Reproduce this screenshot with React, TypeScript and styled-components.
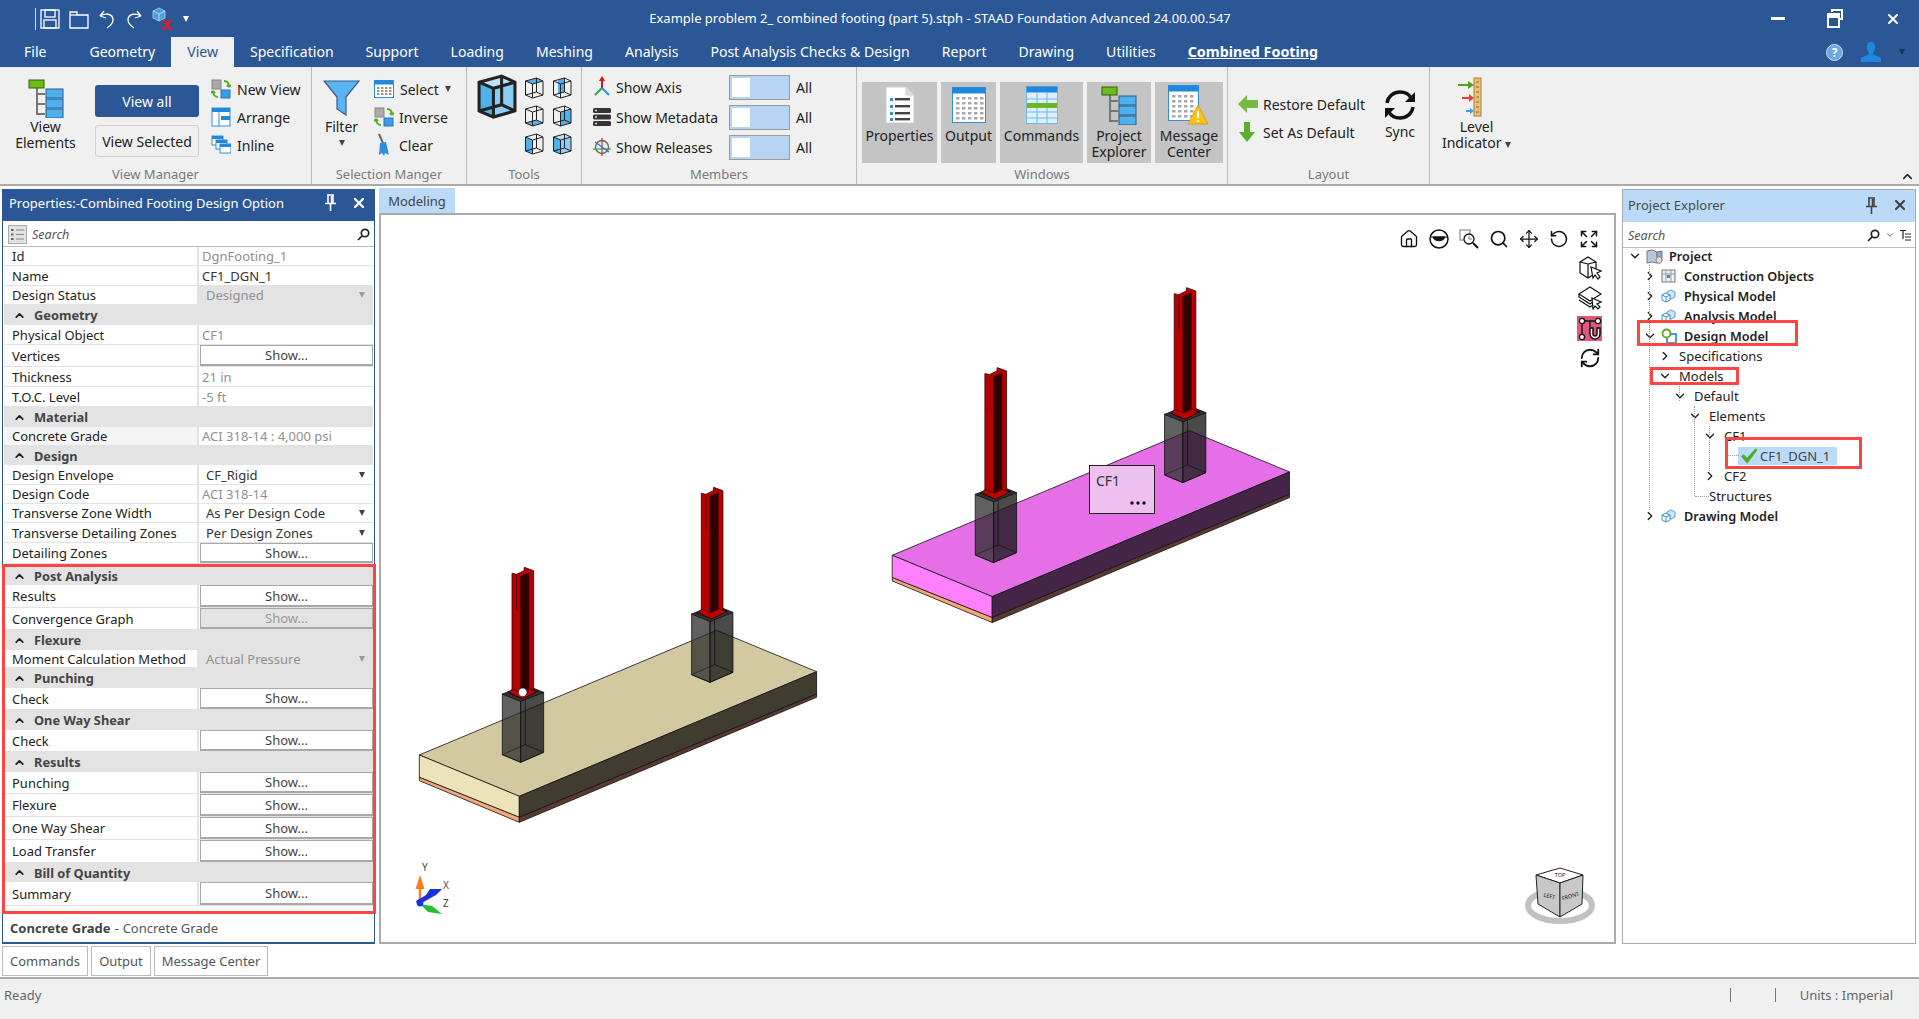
import React from 'react'
import styled, { createGlobalStyle } from 'styled-components'
import { ChevronDown, ChevronRight, ChevronUp, Expand, Home, Move, RefreshCw, RotateCcw, Search, X } from 'lucide-react'

const GlobalStyle = createGlobalStyle`
  html, body { margin: 0; padding: 0; background: #fff; }
  body { font-family: "Noto Sans", "Liberation Sans", sans-serif; color: #222; overflow: hidden; }
`
const BLUE = '#2b5797'

const Page = styled.div`
  width: 1919px;
  height: 1019px;
  display: flex;
  flex-direction: column;
  overflow: hidden;
`
/* title bar */
const TitleBar = styled.div`
  height: 37px;
  background: ${BLUE};
  display: flex;
  align-items: center;
  color: #fff;
`
const QuickBar = styled.div`
  width: 420px;
  display: flex;
  align-items: center;
  padding-left: 35px;
  gap: 9px;
  box-sizing: border-box;
  svg { display: block; }
`
const QuickSep = styled.div`
  width: 1px;
  height: 22px;
  background: #cfd9ea;
  margin-right: -5px;
`
const TitleText = styled.div`
  width: 1040px;
  text-align: center;
  font-size: 13px;
  margin-top: -2px;
`
const WinButtons = styled.div`
  flex: 1;
  display: flex;
  justify-content: flex-end;
  align-items: center;
  gap: 42px;
  padding-right: 18px;
`
/* tabs */
const TabRow = styled.div`
  height: 30px;
  background: ${BLUE};
  display: flex;
  align-items: stretch;
  padding-left: 24px;
  position: relative;
`
const Tab = styled.div<{ $active?: boolean; $strong?: boolean }>`
  display: flex;
  align-items: center;
  padding: 0 16px 2px;
  font-size: ${p => (p.$strong ? 14.3 : 14.05)}px;
  color: ${p => (p.$active ? BLUE : '#fff')};
  background: ${p => (p.$active ? '#f0f0f0' : 'transparent')};
  font-weight: ${p => (p.$strong ? 700 : 400)};
  text-decoration: ${p => (p.$strong ? 'underline' : 'none')};
`
const FileTab = styled(Tab)`
  padding: 0 0 2px;
  margin-right: 27px;
`
const TabRight = styled.div`
  position: absolute;
  right: 14px;
  top: 0;
  height: 30px;
  display: flex;
  align-items: center;
  gap: 17px;
`
/* ribbon */
const Ribbon = styled.div`
  height: 117px;
  background: #f0f0f0;
  border-bottom: 2px solid #aaa;
  display: flex;
  position: relative;
`
const Group = styled.div<{ $w: number; $last?: boolean }>`
  width: ${p => p.$w}px;
  box-sizing: border-box;
  border-right: ${p => (p.$last ? 'none' : '1px solid #bbb')};
  display: flex;
  flex-direction: column;
`
const GroupBody = styled.div<{ $gap?: number; $left?: number; $top?: number }>`
  flex: 1;
  display: flex;
  padding-left: ${p => p.$left || 0}px;
  padding-top: ${p => p.$top ?? 8}px;
  gap: ${p => p.$gap || 0}px;
  min-height: 0;
`
const GroupLabel = styled.div`
  height: 18px;
  text-align: center;
  font-size: 13px;
  color: #7a7a7a;
  line-height: 16px;
`
const BigCol = styled.div<{ $w: number }>`
  width: ${p => p.$w}px;
  display: flex;
  flex-direction: column;
  align-items: center;
  font-size: 14px;
  line-height: 16px;
  text-align: center;
`
const IconBox = styled.div<{ $h: number; $shift?: number }>`
  height: ${p => p.$h}px;
  display: flex;
  align-items: center;
  justify-content: center;
  margin-right: ${p => p.$shift || 0}px;
`
const BtnCol = styled.div`
  width: 104px;
  display: flex;
  flex-direction: column;
  gap: 8px;
  padding-top: 8px;
  margin: 0 12px 0 4px;
`
const RibbonButton = styled.div<{ $primary?: boolean }>`
  height: 32px;
  border-radius: 3px;
  display: flex;
  align-items: center;
  justify-content: center;
  font-size: 14px;
  box-sizing: border-box;
  background: ${p => (p.$primary ? BLUE : '#f0f0f0')};
  color: ${p => (p.$primary ? '#fff' : '#222')};
  border: ${p => (p.$primary ? 'none' : '1px solid #d0d0d0')};
`
const SmallCol = styled.div<{ $gap?: number; $top?: number }>`
  display: flex;
  flex-direction: column;
  gap: ${p => p.$gap ?? 8}px;
  padding-top: ${p => p.$top ?? 5}px;
`
const SmallItem = styled.div<{ $gap?: number }>`
  height: 20px;
  display: flex;
  align-items: center;
  gap: ${p => p.$gap ?? 6}px;
  font-size: 14px;
  white-space: nowrap;
`
const Caret = styled.span<{ $c?: string }>`
  display: inline-block;
  width: 0;
  height: 0;
  border-left: 3.5px solid transparent;
  border-right: 3.5px solid transparent;
  border-top: 6px solid ${p => p.$c || '#444'};
`
const CubeGrid = styled.div`
  display: grid;
  grid-template-columns: 28px 28px;
  grid-auto-rows: 28px;
  place-items: center;
  margin-left: 3px;
`
const MemberRow = styled.div`
  height: 30px;
  display: flex;
  align-items: center;
  font-size: 14px;
`
const MemberName = styled.div`
  width: 137px;
  display: flex;
  align-items: center;
  gap: 4px;
  white-space: nowrap;
`
const Toggle = styled.div`
  width: 61px;
  height: 25px;
  box-sizing: border-box;
  background: #b8d4f4;
  border: 1px solid #9a9a9a;
  padding: 2px;
  margin-right: 6px;
`
const Knob = styled.div`
  width: 18px;
  height: 100%;
  background: #fff;
`
const WinButton = styled.div<{ $w: number }>`
  width: ${p => p.$w}px;
  height: 81px;
  background: #c4c4c4;
  display: flex;
  flex-direction: column;
  align-items: center;
  font-size: 14px;
  line-height: 16px;
  text-align: center;
  white-space: nowrap;
`
const WinIcon = styled.div<{ $h: number }>`
  height: ${p => p.$h}px;
  display: flex;
  align-items: center;
  justify-content: center;
  flex-shrink: 0;
`
const Collapse = styled.div`
  position: absolute;
  right: 4px;
  bottom: 1px;
  height: 16px;
  color: #222;
`
/* main area */
const Main = styled.div`
  height: 758px;
  padding-top: 2px;
  display: flex;
  box-sizing: border-box;
`
const PropsPanel = styled.div`
  width: 373px;
  margin-left: 2px;
  display: flex;
  flex-direction: column;
  border: 1px solid ${BLUE};
  border-width: 0 1px 2px 1px;
  box-sizing: border-box;
  margin-top: 1px;
`
const PanelHead = styled.div<{ $light?: boolean }>`
  height: 32px;
  flex-shrink: 0;
  box-sizing: border-box;
  display: flex;
  align-items: center;
  padding: 0 7px ${p => (p.$light ? 2 : 5)}px ${p => (p.$light ? 5 : 6)}px;
  background: ${p => (p.$light ? '#bbdaf8' : BLUE)};
  color: ${p => (p.$light ? '#4a4a4a' : '#fff')};
  font-size: 13px;
`
const PanelTitle = styled.div`
  flex: 1;
`
const PinGroup = styled.div`
  display: flex;
  align-items: center;
  gap: 14px;
  svg { display: block; }
`
const SearchRow = styled.div`
  height: 26px;
  flex-shrink: 0;
  box-sizing: border-box;
  display: flex;
  align-items: center;
  gap: 5px;
  padding: 1px 4px 0 5px;
  border-bottom: 1px solid #bbb;
  font-size: 12.5px;
  font-style: italic;
  color: #555;
`
const Grow = styled.div`
  flex: 1;
`
const Row = styled.div<{ $h: number }>`
  height: ${p => p.$h}px;
  box-sizing: border-box;
  display: flex;
  border-bottom: 1px solid #e2e2e2;
  margin: 0 1px;
  font-size: 13px;
`
const RowLabel = styled.div<{ $active?: boolean }>`
  width: 195px;
  flex-shrink: 0;
  padding-left: 8px;
  display: flex;
  align-items: center;
  box-sizing: border-box;
  border-right: 2px solid #e2e2e2;
  background: ${p => (p.$active ? '#f5f5f5' : '#fff')};
  color: #222;
  white-space: nowrap;
`
const RowValue = styled.div<{ $kind: string }>`
  flex: 1;
  display: flex;
  align-items: center;
  justify-content: space-between;
  padding: 0 8px 0 ${p => (p.$kind === 'drop' || p.$kind === 'off' ? 7 : 3)}px;
  color: ${p => (p.$kind === 'edit' || p.$kind === 'drop' ? '#333' : '#909090')};
  background: ${p => (p.$kind === 'off' ? '#e3e3e3' : '#fff')};
`
const ShowButton = styled.div<{ $off?: boolean }>`
  flex: 1;
  display: flex;
  align-items: center;
  justify-content: center;
  border: 1px solid #a8a8a8;
  border-bottom-width: 2px;
  margin: 0 0 0 1px;
  background: ${p => (p.$off ? '#e3e3e3' : '#fff')};
  color: ${p => (p.$off ? '#999' : '#444')};
`
const SectionRow = styled.div<{ $h: number }>`
  height: ${p => p.$h}px;
  box-sizing: border-box;
  margin: 0 1px;
  background: #e3e3e3;
  display: flex;
  align-items: center;
  gap: 8px;
  padding-left: 9px;
  font-size: 12.8px;
  font-weight: 700;
  color: #444;
`
const Highlighted = styled.div`
  border: 3px solid #f44;
  padding-bottom: 5px;
  margin: 0 -2px 0 -1px;
  ${Row}, ${SectionRow} { margin: 0; }
  ${RowLabel} { width: 194px; padding-left: 7px; }
  ${SectionRow} { padding-left: 8px; }
`
const Description = styled.div`
  flex: 1;
  display: flex;
  align-items: center;
  padding-left: 7px;
  font-size: 13px;
  color: #555;
  b { color: #444; margin-right: 4px; }
  span { margin-left: 4px; }
`
const Center = styled.div`
  width: 1237px;
  margin-left: 4px;
  display: flex;
  flex-direction: column;
`
const ModelTab = styled.div`
  width: 76px;
  height: 25px;
  flex-shrink: 0;
  background: #bbdaf8;
  font-size: 13px;
  color: #444;
  display: flex;
  align-items: center;
  justify-content: center;
`
const Canvas = styled.div`
  flex: 1;
  border: 2px solid #aaa;
  position: relative;
  min-height: 0;
  svg.scene { display: block; width: 100%; height: 100%; }
`
const ToolRow = styled.div`
  position: absolute;
  top: 14px;
  right: 15px;
  display: flex;
  gap: 10px;
  svg { display: block; }
`
const ToolCol = styled.div`
  position: absolute;
  top: 41px;
  right: 12px;
  display: flex;
  flex-direction: column;
  align-items: center;
  gap: 6px;
  svg { display: block; }
`
const MagnetBox = styled.div`
  width: 25px;
  height: 25px;
  background: #e0567c;
  display: flex;
  align-items: center;
  justify-content: center;
`
const Explorer = styled.div`
  width: 294px;
  margin-left: 6px;
  border: 1px solid #aaa;
  box-sizing: border-box;
  margin-top: 1px;
  display: flex;
  flex-direction: column;
`
const Tree = styled.div`
  position: relative;
  flex: 1;
`
const TreeRow = styled.div<{ $chev: number; $bold?: boolean }>`
  height: 20px;
  box-sizing: border-box;
  padding-bottom: 4px;
  display: flex;
  align-items: center;
  padding-left: ${p => p.$chev}px;
  font-size: ${p => (p.$bold ? 12.7 : 13)}px;
  font-weight: ${p => (p.$bold ? 600 : 400)};
  color: #222;
  white-space: nowrap;
  svg { flex-shrink: 0; }
`
const ChevSlot = styled.div<{ $w: number }>`
  width: ${p => p.$w}px;
  display: flex;
  align-items: center;
`
const NodeIcon = styled.div`
  width: 23px;
  display: flex;
  align-items: center;
`
const Selected = styled.div`
  display: flex;
  align-items: center;
  gap: 2px;
  height: 18px;
  padding: 0 7px 0 2px;
  background: #bbdaf8;
  color: #444;
  margin-left: 15px;
`
const RedBox = styled.div<{ $x: number; $y: number; $w: number; $h: number }>`
  position: absolute;
  left: ${p => p.$x}px;
  top: ${p => p.$y}px;
  width: ${p => p.$w}px;
  height: ${p => p.$h}px;
  box-sizing: border-box;
  border: 3px solid #f44;
`
const VDash = styled.div<{ $x: number; $y: number; $h: number }>`
  position: absolute;
  left: ${p => p.$x}px;
  top: ${p => p.$y}px;
  height: ${p => p.$h}px;
  border-left: 1px dotted #999;
`
const HDash = styled.div<{ $x: number; $y: number; $w: number }>`
  position: absolute;
  left: ${p => p.$x}px;
  top: ${p => p.$y}px;
  width: ${p => p.$w}px;
  border-top: 1px dotted #999;
`
/* bottom */
const BottomTabs = styled.div`
  height: 33px;
  flex-shrink: 0;
  box-sizing: border-box;
  padding: 2px 0 1px 2px;
  display: flex;
  gap: 3px;
`
const BottomTab = styled.div<{ $w: number }>`
  width: ${p => p.$w}px;
  box-sizing: border-box;
  border: 1px solid #bbb;
  display: flex;
  align-items: center;
  justify-content: center;
  font-size: 13px;
  color: #555;
`
const StatusBar = styled.div`
  flex: 1;
  background: #f0f0f0;
  border-top: 2px solid #aaa;
  display: flex;
  align-items: center;
  padding: 0 26px 8px 4px;
  font-size: 13px;
  color: #666;
`
const StatusSep = styled.div<{ $gap: number }>`
  width: 1px;
  height: 14px;
  background: #777;
  margin-right: ${p => p.$gap}px;
`

/* ---------- ribbon icons ---------- */
const Save = () => (
  <svg width="20" height="20" viewBox="0 0 20 20" fill="none" stroke="#fff" strokeWidth="1.3">
    <rect x="1" y="1" width="18" height="18" />
    <rect x="5" y="1" width="10" height="7" />
    <rect x="4" y="11" width="12" height="8" />
  </svg>
)
const Folder = () => (
  <svg width="20" height="20" viewBox="0 0 20 20" fill="none" stroke="#fff" strokeWidth="1.3">
    <path d="M1 3h7v3h11v13H1z" />
    <path d="M1 6h7" />
  </svg>
)
const Undo = ({ flip }: { flip?: boolean }) => (
  <svg width="18" height="20" viewBox="0 0 18 20" fill="none" stroke="#fff" strokeWidth="1.3" style={flip ? { transform: 'scaleX(-1)' } : undefined}>
    <path d="M2 7l4-5M2 7l6 2" />
    <path d="M2 7c4-3 13-3 13 4 0 4-3 6-6 8" />
  </svg>
)
const CubeX = () => (
  <svg width="22" height="26" viewBox="0 0 22 26">
    <path d="M7 2l6 3v7l-6 3-6-3V5z" fill="#4a9fe0" stroke="#bcd" strokeWidth=".8" />
    <path d="M1 5l6 3 6-3M7 8v7" stroke="#cfe3f6" strokeWidth=".8" fill="none" />
    <path d="M11 14l8 10M19 14l-8 10" stroke="#e81c1c" strokeWidth="2.4" />
  </svg>
)
const Pin = ({ c }: { c: string }) => (
  <svg width="13" height="17" viewBox="0 0 13 17" fill="none" stroke={c} strokeWidth="1.6">
    <path d="M3 1h7M4 1v8M9 1v8M1 9.5h11" />
    <path d="M6.5 10v7" />
    <path d="M7.5 2v7" strokeWidth="1.6" />
  </svg>
)
const TreeIcon = () => (
  <svg width="36" height="39" viewBox="0 0 36 39">
    <path d="M9 9v26h8M9 15h8M9 25h8" fill="none" stroke="#777" strokeWidth="2" />
    <rect x="1" y="1" width="15" height="8" fill="#6bbd14" stroke="#3a5a10" />
    {[10, 20, 30].map(y => (
      <rect key={y} x="18" y={y} width="17" height="9" fill="#4fb0ee" stroke="#2a5a88" />
    ))}
  </svg>
)
const NewViewIcon = () => (
  <svg width="20" height="20" viewBox="0 0 20 20">
    <rect x="1" y="1" width="9" height="9" fill="#aaa" stroke="#888" />
    <rect x="10" y="11" width="9" height="8" fill="#3a9be8" stroke="#2877b8" />
    <path d="M13 2c3 0 5 2 5 6M18 8l-2-2M18 8l2-2" fill="none" stroke="#4caf20" strokeWidth="1.8" />
    <path d="M7 18c-3 0-5-2-5-6M2 12l-2 2M2 12l2 2" fill="none" stroke="#4caf20" strokeWidth="1.8" />
  </svg>
)
const ArrangeIcon = () => (
  <svg width="20" height="20" viewBox="0 0 20 20">
    <rect x="1" y="1" width="18" height="18" fill="#fff" stroke="#2f8fdd" />
    <rect x="1" y="1" width="18" height="4" fill="#1f88dd" />
    <rect x="10" y="9" width="9" height="4" fill="#1f88dd" />
    <path d="M8 5v14" stroke="#2f8fdd" />
  </svg>
)
const InlineIcon = () => (
  <svg width="20" height="20" viewBox="0 0 20 20">
    {[0, 4, 8].map(o => (
      <g key={o}>
        <rect x={o + 1} y={o + 1} width="11" height="9" fill="#fff" stroke="#2f8fdd" />
        <rect x={o + 1} y={o + 1} width="11" height="3" fill="#1f88dd" />
      </g>
    ))}
  </svg>
)
const Funnel = () => (
  <svg width="37" height="36" viewBox="0 0 37 36">
    <path d="M1 1h35L23 17v18l-9-6V17z" fill="#58b4f2" stroke="#3a5f80" strokeWidth="1.2" />
  </svg>
)
const SelectIcon = () => (
  <svg width="20" height="18" viewBox="0 0 20 18">
    <rect x=".5" y=".5" width="19" height="17" fill="#fff" stroke="#2f8fdd" />
    <rect x=".5" y=".5" width="19" height="4" fill="#1f88dd" />
    {[7, 10, 13].map(y => [3, 7, 11, 15].map(x => <rect key={`${x}${y}`} x={x} y={y} width="2.5" height="2" fill="#999" />))}
  </svg>
)
const Broom = () => (
  <svg width="20" height="24" viewBox="0 0 20 24">
    <path d="M5 1l4 9" stroke="#666" strokeWidth="2" />
    <path d="M6 10l6-1 3 13-4-2-1 3-2-3-3 2z" fill="#2f8fdd" />
  </svg>
)
const Cube = ({ size, mode, heavy }: { size: number; mode: number; heavy?: boolean }) => (
  <svg width={size} height={size * 1.1} viewBox="0 0 40 44">
    <path d="M3 8l22-6 13 6v28l-21 6L3 36z" fill="#bfe0f8" fillOpacity={mode === 0 ? 1 : 0} />
    {mode === 0 && <path d="M3 8l14 6v28L3 36z" fill="#4fb0ee" />}
    {mode === 0 && <path d="M17 14l21-6v28l-21 6z" fill="#8ccdf6" />}
    {mode === 1 && <path d="M3 8l22-6 13 6-21 6z" fill="#4fb0ee" />}
    {mode === 2 && <path d="M17 14l21-6v28l-21 6z" fill="#4fb0ee" />}
    {mode === 3 && <path d="M3 36l22-6 13 6-21 6z" fill="#4fb0ee" />}
    {mode === 4 && <path d="M3 8l14 6v28L3 36z" fill="#4fb0ee" />}
    {mode === 5 && <path d="M12 6l13-4v28l-13 4z" fill="#4fb0ee" />}
    <path
      d="M3 8l22-6 13 6v28l-21 6L3 36zM3 8l14 6 21-6M17 14v28M25 2v28M3 36l22-6 13 6"
      fill="none"
      stroke="#222"
      strokeWidth={heavy ? 3 : 2}
    />
  </svg>
)
const AxisIcon = () => (
  <svg width="20" height="22" viewBox="0 0 20 22" fill="none" strokeWidth="2">
    <path d="M10 12V3" stroke="#e01010" />
    <path d="M10 0l3 5H7z" fill="#e01010" />
    <path d="M10 12l-7 7" stroke="#2aa83a" />
    <path d="M10 12l7 7" stroke="#2f8fdd" />
  </svg>
)
const MetaIcon = () => (
  <svg width="20" height="20" viewBox="0 0 20 20">
    {[1, 7.5, 14].map(y => (
      <g key={y}>
        <rect x="1" y={y} width="18" height="5" rx="1.5" fill="#333" />
        <circle cx="4" cy={y + 2.5} r="1" fill="#ddd" />
      </g>
    ))}
  </svg>
)
const ReleaseIcon = () => (
  <svg width="20" height="20" viewBox="0 0 20 20" fill="none">
    <circle cx="10" cy="10" r="6.5" stroke="#666" strokeWidth="1.4" />
    <path d="M10 1v18" stroke="#c33" strokeWidth="1.2" />
    <path d="M1 12h18" stroke="#2aa83a" strokeWidth="1.2" />
    <path d="M3 5l14 10" stroke="#2f6fdd" strokeWidth="1.2" />
  </svg>
)
const PropsIcon = () => (
  <svg width="32" height="38" viewBox="0 0 32 38">
    <path d="M2 1h20l8 8v28H2z" fill="#fff" stroke="#ccc" />
    <path d="M22 1v8h8" fill="#ddd" stroke="#ccc" />
    {[12, 19, 26, 32].map(y => (
      <g key={y}>
        <rect x="6" y={y} width="3" height="3" fill="#2f8fdd" />
        <rect x="11" y={y} width="15" height="2.4" fill="#444" />
      </g>
    ))}
  </svg>
)
const OutputIcon = () => (
  <svg width="34" height="36" viewBox="0 0 34 36">
    <rect x=".5" y=".5" width="33" height="35" fill="#fff" stroke="#2f8fdd" />
    <rect x=".5" y=".5" width="33" height="6" fill="#1f88dd" />
    {[10, 15, 20, 25, 30].map(y => [4, 10, 16, 22, 28].map(x => <rect key={`${x}${y}`} x={x} y={y} width="3.5" height="2.5" fill="#a8a8a8" />))}
  </svg>
)
const CommandsIcon = () => (
  <svg width="32" height="38" viewBox="0 0 32 38">
    <rect x=".5" y=".5" width="31" height="37" fill="#dff0fd" stroke="#6fb8ee" />
    <rect x=".5" y=".5" width="31" height="6" fill="#1f88dd" />
    <path d="M1 13h30M1 26h30M1 32h30M11 6v32M21 6v32" stroke="#6fb8ee" />
    <rect x="1" y="17" width="30" height="5" fill="#6ab820" />
  </svg>
)
const MessageIcon = () => (
  <svg width="42" height="40" viewBox="0 0 42 40">
    <rect x=".5" y=".5" width="30" height="35" fill="#fff" stroke="#2f8fdd" />
    <rect x=".5" y=".5" width="30" height="6" fill="#1f88dd" />
    {[10, 15, 20, 25, 30].map(y => [4, 10, 16, 22].map(x => <rect key={`${x}${y}`} x={x} y={y} width="3.5" height="2.5" fill="#a8a8a8" />))}
    <path d="M30 20l10 19H20z" fill="#f6c21c" stroke="#e0a010" />
    <path d="M30 26v7M30 35v2" stroke="#fff" strokeWidth="2" />
  </svg>
)
const GreenLeft = () => (
  <svg width="20" height="18" viewBox="0 0 20 18">
    <path d="M0 9l9-9v5h11v8H9v5z" fill="#79b843" />
  </svg>
)
const GreenDown = () => (
  <svg width="18" height="20" viewBox="0 0 18 20">
    <path d="M9 20L1 10h5V0h6v10h5z" fill="#5cae2e" />
  </svg>
)
const SyncIcon = () => (
  <svg width="34" height="32" viewBox="0 0 34 32" fill="none" stroke="#111" strokeWidth="3.4">
    <path d="M4 14C5 7 11 3 17 3c5 0 9 2 11 6" />
    <path d="M30 18c-1 7-7 11-13 11-5 0-9-2-11-6" />
    <path d="M32 3v10H22z" fill="#111" stroke="none" />
    <path d="M2 29V19h10z" fill="#111" stroke="none" />
  </svg>
)
const LevelIcon = () => (
  <svg width="24" height="40" viewBox="0 0 24 40">
    <rect x="16" y="1" width="7" height="38" fill="#e8c078" stroke="#a87f3a" />
    <path d="M18 5h3M18 10h3M18 15h3M18 20h3M18 25h3M18 30h3M18 35h3" stroke="#8a6a30" />
    <path d="M0 7h10V4l6 4-6 4V9H0z" fill="#5a9e20" />
    <path d="M4 20h7v-3l5 4-5 4v-3H4z" fill="#f03a3a" />
    <path d="M8 33h4v-2l4 3-4 3v-2H8z" fill="#3aa0e8" />
  </svg>
)
const ListBox = () => (
  <svg width="19" height="19" viewBox="0 0 19 19">
    <rect x=".5" y=".5" width="18" height="18" fill="#e2e2e2" stroke="#aaa" />
    <path d="M8 5h8M8 9.5h8M8 14h8" stroke="#888" />
    <path d="M3 5h2.5M3 9.5h2.5M3 14h2.5" stroke="#666" strokeWidth="2" />
  </svg>
)
const Magnifier = ({ size = 13 }: { size?: number }) => (
  <svg width={size} height={size} viewBox="0 0 13 13" fill="none" stroke="#222" strokeWidth="1.7">
    <circle cx="8" cy="5" r="3.7" />
    <path d="M5.4 7.6L1 12" />
  </svg>
)
const TreeToggle = () => (
  <svg width="11" height="12" viewBox="0 0 11 12" stroke="#222" strokeWidth="1.2" fill="none">
    <path d="M0 1.5h6M3 1.5V10M5 5h6M5 8h6M5 11h6" />
  </svg>
)
const ModelNode = () => (
  <svg width="16" height="15" viewBox="0 0 16 15" fill="none">
    <path d="M6 3l4-2 4 2v5l-4 2-4-2z" fill="#cfe6f7" stroke="#5a9fd0" />
    <path d="M1 6l4-2 4 2v5l-4 2-4-2z" fill="#fff" stroke="#3a8fd0" />
    <path d="M5 8v5M1 6l4 2 4-2" stroke="#3a8fd0" />
  </svg>
)
const ObjectsNode = () => (
  <svg width="15" height="14" viewBox="0 0 15 14">
    <rect x="1" y="1" width="13" height="12" fill="#eef2f6" stroke="#777" />
    <path d="M1 5h13M5 1v12M10 1v12" stroke="#99a" />
    <rect x="6" y="6" width="3" height="3" fill="#48a" />
  </svg>
)
const ProjectNode = () => (
  <svg width="18" height="15" viewBox="0 0 18 15">
    <path d="M1 2l5-1 5 2v11l-5-1-5 1z" fill="#b8c8d8" stroke="#778" />
    <path d="M11 3l5-1v10l-5 2z" fill="#8fa8c0" stroke="#778" />
    <ellipse cx="13" cy="11" rx="3" ry="3.4" fill="#ddd" stroke="#888" />
  </svg>
)
const DesignNode = () => (
  <svg width="16" height="16" viewBox="0 0 16 16" fill="none">
    <rect x="6" y="6" width="9" height="9" stroke="#2f8fdd" strokeWidth="1.8" />
    <circle cx="5.5" cy="5.5" r="4" fill="#fff" stroke="#5aa81e" strokeWidth="1.8" />
  </svg>
)
const Check = () => (
  <svg width="18" height="18" viewBox="0 0 15 15">
    <path d="M1 8l2-2 3 3 7-8 1.5 1.5L6 14z" fill="#4caf20" />
  </svg>
)
const EyeIcon = () => (
  <svg width="20" height="20" viewBox="0 0 20 20" fill="none">
    <circle cx="10" cy="10" r="9" stroke="#111" strokeWidth="1.5" />
    <path d="M2 8h16M4 8c1 5 11 5 12 0z" fill="#111" stroke="#111" strokeWidth="1" />
  </svg>
)
const ZoomWindow = () => (
  <svg width="20" height="20" viewBox="0 0 20 20" fill="none" stroke="#111">
    <rect x="1" y="1" width="10" height="10" stroke="#777" />
    <circle cx="10" cy="10" r="5" fill="#fff" strokeWidth="1.3" />
    <path d="M14 14l5 5" strokeWidth="2" />
    <path d="M10 7v3h3" stroke="#777" />
  </svg>
)
const CubeCursor = () => (
  <svg width="24" height="24" viewBox="0 0 24 24" fill="none" stroke="#111" strokeWidth="1.2">
    <path d="M2 6l8-5 8 5v11l-8 5-8-5z" />
    <path d="M10 8l8-2M10 8v14M2 6l8 2" />
    <path d="M13 11l10 4-4 2 3 4-2 2-3-4-2 3z" fill="#fff" />
  </svg>
)
const LayerCursor = () => (
  <svg width="24" height="24" viewBox="0 0 24 24" fill="none" stroke="#111" strokeWidth="1.2">
    <path d="M1 8l11-7 11 7-11 7z" />
    <path d="M1 8v3l11 7 3-2M1 14l11 7 3-2" />
    <path d="M14 12l9 4-4 2 3 3-2 2-3-3-2 3z" fill="#fff" />
  </svg>
)
const MagnetIcon = () => (
  <svg width="24" height="24" viewBox="0 0 24 24" fill="none" stroke="#111" strokeWidth="1.3">
    <path d="M5 4h14M4 6v12M12 4v6" />
    <circle cx="4" cy="4" r="2.6" fill="#fff" />
    <circle cx="20" cy="4" r="2.6" fill="#fff" />
    <circle cx="4" cy="20" r="2.6" fill="#fff" />
    <path d="M12 11v6a5 5 0 0 0 10 0v-6h-3v6a2 2 0 0 1-4 0v-6z" fill="#fff" strokeWidth="1.5" />
  </svg>
)
const UserIcon = () => (
  <svg width="22" height="20" viewBox="0 0 22 20">
    <path d="M11 0c3 0 4 2 4 5s-1 5-2 6c0 2 4 3 8 5v4H1v-4c4-2 8-3 8-5-1-1-2-3-2-6s1-5 4-5z" fill="#1f88dd" />
  </svg>
)
const Help = () => (
  <svg width="17" height="17" viewBox="0 0 17 17">
    <circle cx="8.5" cy="8.5" r="8" fill="#6aa6e8" stroke="#cfe2f8" />
    <text x="8.5" y="13" fontSize="12" fontWeight="700" textAnchor="middle" fill="#fff" fontFamily="Noto Sans">?</text>
  </svg>
)

/* ---------- 3d scene, coordinates follow the footing drawing ---------- */
const Column = ({ dx, dy, pivot }: { dx: number; dy: number; pivot?: boolean }) => (
  <g transform={`translate(${dx} ${dy})`} stroke="#111" strokeWidth="2.4" strokeLinejoin="round">
    <polygon points="367,827 422,850 491,820 436,797" fill="rgba(255,255,255,.12)" />
    <polygon points="367,645 422,667 422,850 367,827" fill="rgba(40,40,40,.74)" />
    <polygon points="422,667 491,640 491,820 422,850" fill="rgba(20,20,20,.77)" />
    <path d="M436,664V797" fill="none" />
    <polygon points="367,645 422,667 491,640 436,618" fill="#333" />
    <polygon points="382,642 422,658 475,637 436,622" fill="#3f3f3f" />
    <polygon points="396,283 410,286 432,275 433,265 461,275 461,634 428,656 396,640" fill="#b80000" stroke="#300" />
    <polygon points="421,291 448,279 448,630 421,642" fill="#300000" stroke="none" />
    <path d="M410,290V392" stroke="#300" fill="none" />
    <polygon points="386,640 428,660 470,638 448,630 424,642 398,630" fill="#c00000" stroke="#300" />
    {pivot && <circle cx="428" cy="640" r="13" fill="#fff" stroke="#222" />}
  </g>
)
const Footing = ({ top, left, right, stripL, stripR, dx = 0, dy = 0, pivot }: {
  top: string; left: string; right: string; stripL: string; stripR: string; dx?: number; dy?: number; pivot?: boolean
}) => (
  <g transform={`translate(${380 + dx} ${480 + dy}) scale(.3333)`}>
    <g stroke="#111" strokeWidth="2.4" strokeLinejoin="round">
      <polygon points="118,828 418,952 1310,578 1010,454" fill={top} />
      <polygon points="118,828 418,952 418,1015 118,895" fill={left} />
      <polygon points="418,952 1310,578 1310,645 418,1015" fill={right} />
      <polygon points="118,895 418,1015 418,1030 118,905" fill={stripL} />
      <polygon points="418,1015 1310,645 1310,655 418,1030" fill={stripR} />
    </g>
    <Column dx={568} dy={-240} />
    <Column dx={0} dy={0} pivot={pivot} />
  </g>
)
const Scene = () => (
  <svg className="scene" viewBox="381 216 1233 727">
    <Footing top="#d3c9a1" left="#ede3bb" right="#403c2f" stripL="#f4a878" stripR="#5a3a30" pivot />
    <Footing top="#e46fe6" left="#ff80ff" right="#442548" stripL="#f4a878" stripR="#5a3a30" dx={472.9} dy={-199.7} />
    <rect x="1089.5" y="466.5" width="65" height="48" fill="#edc0ef" stroke="#222" />
    <text x="1096" y="487" fontSize="14" fill="#333" fontFamily="Noto Sans">CF1</text>
    <g fill="#111">
      <circle cx="1132" cy="504" r="1.7" />
      <circle cx="1138" cy="504" r="1.7" />
      <circle cx="1144" cy="504" r="1.7" />
    </g>
    {/* axis triad */}
    <path d="M420 901V888" stroke="#ff7a20" strokeWidth="2.4" />
    <path d="M420 876l4.5 14h-9z" fill="#ff7a20" />
    <path d="M418 906l18-10 6-6h-12l-4 6-10 6z" fill="#1a30e0" />
    <path d="M420 905l12 2 10 8-14-2-4-4z" fill="#20c030" />
    <circle cx="420" cy="904" r="3.4" fill="#1a30e0" />
    <g fontSize="10" fill="#444" fontFamily="Noto Sans">
      <text x="422" y="872">Y</text>
      <text x="443" y="890">X</text>
      <text x="443" y="908">Z</text>
    </g>
    {/* view cube */}
    <ellipse cx="1560" cy="906.5" rx="32" ry="15.5" fill="#fff" stroke="#c0c0c0" strokeWidth="6" />
    <g stroke="#222" strokeWidth="1" strokeLinejoin="round">
      <polygon points="1536,876 1560,869 1583,876 1560,884" fill="#fff" />
      <polygon points="1536,876 1560,884 1560,918 1538,905" fill="#c8c8c8" />
      <polygon points="1560,884 1583,876 1582,905 1560,918" fill="#c8c8c8" />
    </g>
    <g fontSize="5.5" fill="#111" fontFamily="Noto Sans" textAnchor="middle">
      <text x="1560" y="878">TOP</text>
      <text x="1549" y="899" transform="rotate(14 1549 899)">LEFT</text>
      <text x="1571" y="899" transform="rotate(-16 1571 899)">FRONT</text>
    </g>
  </svg>
)

/* ---------- data ---------- */
type Item =
  | { s: string; h: number }
  | { l: string; h: number; v?: string; k: 'read' | 'edit' | 'drop' | 'off' | 'show' | 'showoff'; active?: boolean }

const upper: Item[] = [
  { l: 'Id', h: 19, v: 'DgnFooting_1', k: 'read' },
  { l: 'Name', h: 20, v: 'CF1_DGN_1', k: 'edit' },
  { l: 'Design Status', h: 19, v: 'Designed', k: 'off' },
  { s: 'Geometry', h: 20 },
  { l: 'Physical Object', h: 20, v: 'CF1', k: 'read' },
  { l: 'Vertices', h: 22, k: 'show' },
  { l: 'Thickness', h: 20, v: '21 in', k: 'read' },
  { l: 'T.O.C. Level', h: 20, v: '-5 ft', k: 'read' },
  { s: 'Material', h: 20 },
  { l: 'Concrete Grade', h: 19, v: 'ACI 318-14 : 4,000 psi', k: 'read', active: true },
  { s: 'Design', h: 19 },
  { l: 'Design Envelope', h: 20, v: 'CF_Rigid', k: 'drop' },
  { l: 'Design Code', h: 19, v: 'ACI 318-14', k: 'read' },
  { l: 'Transverse Zone Width', h: 19, v: 'As Per Design Code', k: 'drop' },
  { l: 'Transverse Detailing Zones', h: 20, v: 'Per Design Zones', k: 'drop' },
  { l: 'Detailing Zones', h: 21, k: 'show' },
]
const lower: Item[] = [
  { s: 'Post Analysis', h: 18 },
  { l: 'Results', h: 23, k: 'show' },
  { l: 'Convergence Graph', h: 22, k: 'showoff' },
  { s: 'Flexure', h: 20 },
  { l: 'Moment Calculation Method', h: 18, v: 'Actual Pressure', k: 'off' },
  { s: 'Punching', h: 20 },
  { l: 'Check', h: 22, k: 'show' },
  { s: 'One Way Shear', h: 20 },
  { l: 'Check', h: 22, k: 'show' },
  { s: 'Results', h: 20 },
  { l: 'Punching', h: 22, k: 'show' },
  { l: 'Flexure', h: 23, k: 'show' },
  { l: 'One Way Shear', h: 23, k: 'show' },
  { l: 'Load Transfer', h: 23, k: 'show' },
  { s: 'Bill of Quantity', h: 19 },
  { l: 'Summary', h: 24, k: 'show' },
]
const renderItem = (it: Item, i: number) => {
  if ('s' in it) {
    return (
      <SectionRow key={i} $h={it.h}>
        <ChevronUp size={13} strokeWidth={3.4} color="#222" />
        {it.s}
      </SectionRow>
    )
  }
  return (
    <Row key={i} $h={it.h}>
      <RowLabel $active={it.active}>{it.l}</RowLabel>
      {it.k === 'show' || it.k === 'showoff' ? (
        <ShowButton $off={it.k === 'showoff'}>Show...</ShowButton>
      ) : (
        <RowValue $kind={it.k}>
          {it.v}
          {it.k === 'drop' && <Caret />}
          {it.k === 'off' && <Caret $c="#999" />}
        </RowValue>
      )}
    </Row>
  )
}
const Chev = ({ open }: { open?: boolean }) =>
  open ? <ChevronDown size={14} strokeWidth={2.4} color="#222" /> : <ChevronRight size={14} strokeWidth={2.4} color="#222" />

export default function App() {
  return (
    <Page>
      <GlobalStyle />
      <TitleBar>
        <QuickBar>
          <QuickSep />
          <Save />
          <Folder />
          <Undo />
          <Undo flip />
          <CubeX />
          <Caret $c="#fff" />
        </QuickBar>
        <TitleText>Example problem 2_ combined footing (part 5).stph - STAAD Foundation Advanced 24.00.00.547</TitleText>
        <WinButtons>
          <svg width="14" height="3" viewBox="0 0 14 3"><rect width="14" height="3" fill="#fff" /></svg>
          <svg width="16" height="19" viewBox="0 0 16 19" fill="none" stroke="#fff" strokeWidth="2">
            <path d="M5 3V1h10v9h-3" />
            <rect x="1" y="5" width="11" height="13" />
            <rect x="1" y="5" width="11" height="3" fill="#fff" />
          </svg>
          <X size={16} color="#fff" strokeWidth={3} />
        </WinButtons>
      </TitleBar>
      <TabRow>
        <FileTab>File</FileTab>
        <Tab>Geometry</Tab>
        <Tab $active>View</Tab>
        <Tab>Specification</Tab>
        <Tab>Support</Tab>
        <Tab>Loading</Tab>
        <Tab>Meshing</Tab>
        <Tab>Analysis</Tab>
        <Tab>Post Analysis Checks &amp; Design</Tab>
        <Tab>Report</Tab>
        <Tab>Drawing</Tab>
        <Tab>Utilities</Tab>
        <Tab $strong>Combined Footing</Tab>
        <TabRight>
          <Help />
          <UserIcon />
          <Caret $c="#14335f" />
        </TabRight>
      </TabRow>
      <Ribbon>
        <Group $w={312}>
          <GroupBody $top={10}>
            <BigCol $w={91}>
              <IconBox $h={42}><TreeIcon /></IconBox>
              <div>View<br />Elements</div>
            </BigCol>
            <BtnCol>
              <RibbonButton $primary>View all</RibbonButton>
              <RibbonButton>View Selected</RibbonButton>
            </BtnCol>
            <SmallCol $top={2}>
              <SmallItem><NewViewIcon />New View</SmallItem>
              <SmallItem><ArrangeIcon />Arrange</SmallItem>
              <SmallItem><InlineIcon />Inline</SmallItem>
            </SmallCol>
          </GroupBody>
          <GroupLabel>View Manager</GroupLabel>
        </Group>
        <Group $w={155}>
          <GroupBody $left={11} $top={10} $gap={14}>
            <BigCol $w={37}>
              <IconBox $h={42}><Funnel /></IconBox>
              <div>Filter</div>
              <IconBox $h={16}><Caret /></IconBox>
            </BigCol>
            <SmallCol $top={2}>
              <SmallItem>
                <SelectIcon />Select<Caret />
              </SmallItem>
              <SmallItem $gap={5}><NewViewIcon />Inverse</SmallItem>
              <SmallItem $gap={5}><Broom />Clear</SmallItem>
            </SmallCol>
          </GroupBody>
          <GroupLabel>Selection Manger</GroupLabel>
        </Group>
        <Group $w={115}>
          <GroupBody $left={9} $top={7}>
            <Cube size={41} mode={0} heavy />
            <CubeGrid>
              <Cube size={20} mode={1} />
              <Cube size={20} mode={5} />
              <Cube size={20} mode={3} />
              <Cube size={20} mode={2} />
              <Cube size={20} mode={4} />
              <Cube size={20} mode={0} />
            </CubeGrid>
          </GroupBody>
          <GroupLabel>Tools</GroupLabel>
        </Group>
        <Group $w={275}>
          <GroupBody $left={10} $top={5}>
            <div>
              <MemberRow>
                <MemberName><AxisIcon />Show Axis</MemberName>
                <Toggle><Knob /></Toggle>All
              </MemberRow>
              <MemberRow>
                <MemberName><MetaIcon />Show Metadata</MemberName>
                <Toggle><Knob /></Toggle>All
              </MemberRow>
              <MemberRow>
                <MemberName><ReleaseIcon />Show Releases</MemberName>
                <Toggle><Knob /></Toggle>All
              </MemberRow>
            </div>
          </GroupBody>
          <GroupLabel>Members</GroupLabel>
        </Group>
        <Group $w={371}>
          <GroupBody $left={5} $top={15} $gap={4}>
            <WinButton $w={75}><WinIcon $h={46}><PropsIcon /></WinIcon>Properties</WinButton>
            <WinButton $w={55}><WinIcon $h={46}><OutputIcon /></WinIcon>Output</WinButton>
            <WinButton $w={83}><WinIcon $h={46}><CommandsIcon /></WinIcon>Commands</WinButton>
            <WinButton $w={64}><WinIcon $h={46}><TreeIcon /></WinIcon>Project<br />Explorer</WinButton>
            <WinButton $w={68}><WinIcon $h={46}><MessageIcon /></WinIcon>Message<br />Center</WinButton>
          </GroupBody>
          <GroupLabel>Windows</GroupLabel>
        </Group>
        <Group $w={202}>
          <GroupBody $left={10} $top={19} $gap={17}>
            <SmallCol $top={8} $gap={8}>
              <SmallItem $gap={5}><GreenLeft />Restore Default</SmallItem>
              <SmallItem $gap={7}><GreenDown />Set As Default</SmallItem>
            </SmallCol>
            <BigCol $w={36}>
              <IconBox $h={38}><SyncIcon /></IconBox>
              <div>Sync</div>
            </BigCol>
          </GroupBody>
          <GroupLabel>Layout</GroupLabel>
        </Group>
        <Group $w={93} $last>
          <GroupBody $top={8}>
            <BigCol $w={93}>
              <IconBox $h={44} $shift={14}><LevelIcon /></IconBox>
              <div>Level<br />Indicator <Caret /></div>
            </BigCol>
          </GroupBody>
        </Group>
        <Collapse><ChevronUp size={15} strokeWidth={2.4} /></Collapse>
      </Ribbon>
      <Main>
        <PropsPanel>
          <PanelHead>
            <PanelTitle>Properties:-Combined Footing Design Option</PanelTitle>
            <PinGroup>
              <Pin c="#fff" />
              <X size={16} color="#fff" strokeWidth={3.4} />
            </PinGroup>
          </PanelHead>
          <SearchRow>
            <ListBox />
            Search
            <Grow />
            <Magnifier />
          </SearchRow>
          {upper.map(renderItem)}
          <Highlighted>{lower.map(renderItem)}</Highlighted>
          <Description>
            <b>Concrete Grade</b>- <span>Concrete Grade</span>
          </Description>
        </PropsPanel>
        <Center>
          <ModelTab>Modeling</ModelTab>
          <Canvas>
            <Scene />
            <ToolRow>
              <Home size={20} color="#111" strokeWidth={1.6} />
              <EyeIcon />
              <ZoomWindow />
              <Search size={20} color="#111" strokeWidth={2} />
              <Move size={20} color="#111" strokeWidth={1.5} />
              <RotateCcw size={20} color="#111" strokeWidth={1.8} />
              <Expand size={20} color="#111" strokeWidth={1.8} />
            </ToolRow>
            <ToolCol>
              <CubeCursor />
              <LayerCursor />
              <MagnetBox><MagnetIcon /></MagnetBox>
              <RefreshCw size={22} color="#111" strokeWidth={2} />
            </ToolCol>
          </Canvas>
        </Center>
        <Explorer>
          <PanelHead $light>
            <PanelTitle>Project Explorer</PanelTitle>
            <PinGroup>
              <Pin c="#444" />
              <X size={16} color="#444" strokeWidth={3.2} />
            </PinGroup>
          </PanelHead>
          <SearchRow>
            Search
            <Grow />
            <Magnifier />
            <ChevronDown size={10} color="#444" />
            <TreeToggle />
          </SearchRow>
          <Tree>
            <VDash $x={26} $y={17} $h={245} />
            <VDash $x={56} $y={138} $h={15} />
            <VDash $x={71} $y={158} $h={90} />
            <VDash $x={86} $y={178} $h={45} />
            <HDash $x={104} $y={207} $w={12} />
            <HDash $x={72} $y={248} $w={14} />
            <TreeRow $chev={5} $bold><ChevSlot $w={18}><Chev open /></ChevSlot><NodeIcon><ProjectNode /></NodeIcon>Project</TreeRow>
            <TreeRow $chev={20} $bold><ChevSlot $w={18}><Chev /></ChevSlot><NodeIcon><ObjectsNode /></NodeIcon>Construction Objects</TreeRow>
            <TreeRow $chev={20} $bold><ChevSlot $w={18}><Chev /></ChevSlot><NodeIcon><ModelNode /></NodeIcon>Physical Model</TreeRow>
            <TreeRow $chev={20} $bold><ChevSlot $w={18}><Chev /></ChevSlot><NodeIcon><ModelNode /></NodeIcon>Analysis Model</TreeRow>
            <TreeRow $chev={20} $bold><ChevSlot $w={18}><Chev open /></ChevSlot><NodeIcon><DesignNode /></NodeIcon>Design Model</TreeRow>
            <TreeRow $chev={35}><ChevSlot $w={21}><Chev /></ChevSlot>Specifications</TreeRow>
            <TreeRow $chev={35}><ChevSlot $w={21}><Chev open /></ChevSlot>Models</TreeRow>
            <TreeRow $chev={50}><ChevSlot $w={21}><Chev open /></ChevSlot>Default</TreeRow>
            <TreeRow $chev={65}><ChevSlot $w={21}><Chev open /></ChevSlot>Elements</TreeRow>
            <TreeRow $chev={80}><ChevSlot $w={21}><Chev open /></ChevSlot>CF1</TreeRow>
            <TreeRow $chev={100}><Selected><Check />CF1_DGN_1</Selected></TreeRow>
            <TreeRow $chev={80}><ChevSlot $w={21}><Chev /></ChevSlot>CF2</TreeRow>
            <TreeRow $chev={86}>Structures</TreeRow>
            <TreeRow $chev={20} $bold><ChevSlot $w={18}><Chev /></ChevSlot><NodeIcon><ModelNode /></NodeIcon>Drawing Model</TreeRow>
            <RedBox $x={14} $y={72} $w={161} $h={26} />
            <RedBox $x={27} $y={119} $w={89} $h={18} />
            <RedBox $x={102} $y={189} $w={137} $h={32} />
          </Tree>
        </Explorer>
      </Main>
      <BottomTabs>
        <BottomTab $w={86}>Commands</BottomTab>
        <BottomTab $w={60}>Output</BottomTab>
        <BottomTab $w={114}>Message Center</BottomTab>
      </BottomTabs>
      <StatusBar>
        Ready
        <Grow />
        <StatusSep $gap={44} />
        <StatusSep $gap={24} />
        Units : Imperial
      </StatusBar>
    </Page>
  )
}
